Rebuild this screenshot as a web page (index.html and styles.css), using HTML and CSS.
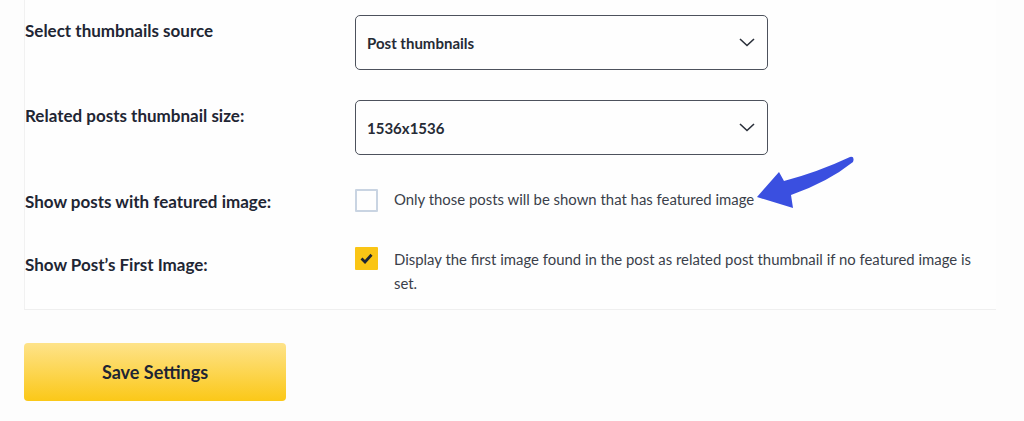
FILE: index.html
```html
<!DOCTYPE html>
<html lang="en">
<head>
<meta charset="utf-8">
<title>Related posts settings</title>
<link rel="stylesheet" href="styles.css">
</head>
<body>
<div class="page">
  <div class="panel">
    <div class="row row-select">
      <div class="label">Select thumbnails source</div>
      <div class="field">
        <div class="select">
          <span>Post thumbnails</span>
          <svg class="chev" width="16" height="9" viewBox="0 0 16 9"><path d="M1 1 L8 7.5 L15 1" fill="none" stroke="#2a2f3a" stroke-width="1.6"/></svg>
        </div>
      </div>
    </div>
    <div class="row row-select">
      <div class="label">Related posts thumbnail size:</div>
      <div class="field">
        <div class="select">
          <span>1536x1536</span>
          <svg class="chev" width="16" height="9" viewBox="0 0 16 9"><path d="M1 1 L8 7.5 L15 1" fill="none" stroke="#2a2f3a" stroke-width="1.6"/></svg>
        </div>
      </div>
    </div>
    <div class="row row-check1">
      <div class="label">Show posts with featured image:</div>
      <div class="field check-field">
        <span class="box"></span>
        <span class="desc">Only those posts will be shown that has featured image</span>
        <svg class="arrow" width="110" height="60" viewBox="748 155 110 60"><path d="M757,197 L779,172 L784,181 Q818,172 850,157 Q855,156 853,162 Q828,182 791,195 L793,208 Z" fill="#3a4fe0"/></svg>
      </div>
    </div>
    <div class="row row-check2">
      <div class="label">Show Post’s First Image:</div>
      <div class="field check-field">
        <span class="box checked"><svg width="13" height="11" viewBox="0 0 13 11"><path d="M1.5 5.5 L5 9 L11.5 1.8" fill="none" stroke="#1e2533" stroke-width="2.8"/></svg></span>
        <span class="desc">Display the first image found in the post as related post thumbnail if no featured image is set.</span>
      </div>
    </div>
  </div>
  <button class="save">Save Settings</button>
</div>
</body>
</html>
```
FILE: styles.css
```css
html, body {
  margin: 0;
  padding: 0;
  background: #fdfdfd;
}
body {
  font-family: "Lato", "Open Sans", sans-serif;
  color: #1e2533;
}
.page {
  padding-left: 24px;
  width: 972px;
}
.panel {
  background: #fefefe;
  border-left: 1px solid #f1f1f1;
  border-bottom: 1px solid #efefef;
  width: 971px;
}
.row {
  display: grid;
  grid-template-columns: 330px 1fr;
}
.label {
  font-size: 17px;
  font-weight: 700;
  line-height: 22px;
  color: #1f2634;
}
.row-select {
  padding: 15px 0;
  height: 55px;
}
.row-select .label {
  padding-top: 5px;
}
.select {
  height: 53px;
  border: 1px solid #4d525c;
  border-radius: 5px;
  display: flex;
  align-items: center;
  justify-content: space-between;
  padding: 0 12px 0 11px;
  box-sizing: content-box;
  width: 388px;
  font-size: 15px;
  font-weight: 700;
  color: #262b36;
}
.row-check1 {
  padding: 17px 0 16px;
}
.row-check1 .label {
  padding-top: 4px;
}
.row-check2 {
  padding: 18px 0 14px;
}
.row-check2 .label {
  padding-top: 7px;
}
.check-field {
  display: flex;
  align-items: flex-start;
  position: relative;
}
.box {
  flex: none;
  width: 19px;
  height: 19px;
  border: 2px solid #c9d4e2;
  border-radius: 1px;
  margin-top: 2px;
  margin-right: 16px;
  display: flex;
  align-items: center;
  justify-content: center;
}
.row-check2 .box {
  margin-top: 0;
}
.box.checked {
  background: #fac515;
  border-color: #fac515;
}
.desc {
  font-size: 14.9px;
  line-height: 24px;
  color: #3a3f4a;
  max-width: 588px;
}
.arrow {
  position: absolute;
  left: 393px;
  top: -32px;
}
.save {
  display: block;
  margin-top: 33px;
  width: 262px;
  height: 58px;
  border: none;
  border-radius: 4px;
  background: linear-gradient(to bottom, #fee38a, #fbc818);
  font-family: "Lato", sans-serif;
  font-size: 18px;
  font-weight: 700;
  color: #1e2533;
  cursor: pointer;
}
```
